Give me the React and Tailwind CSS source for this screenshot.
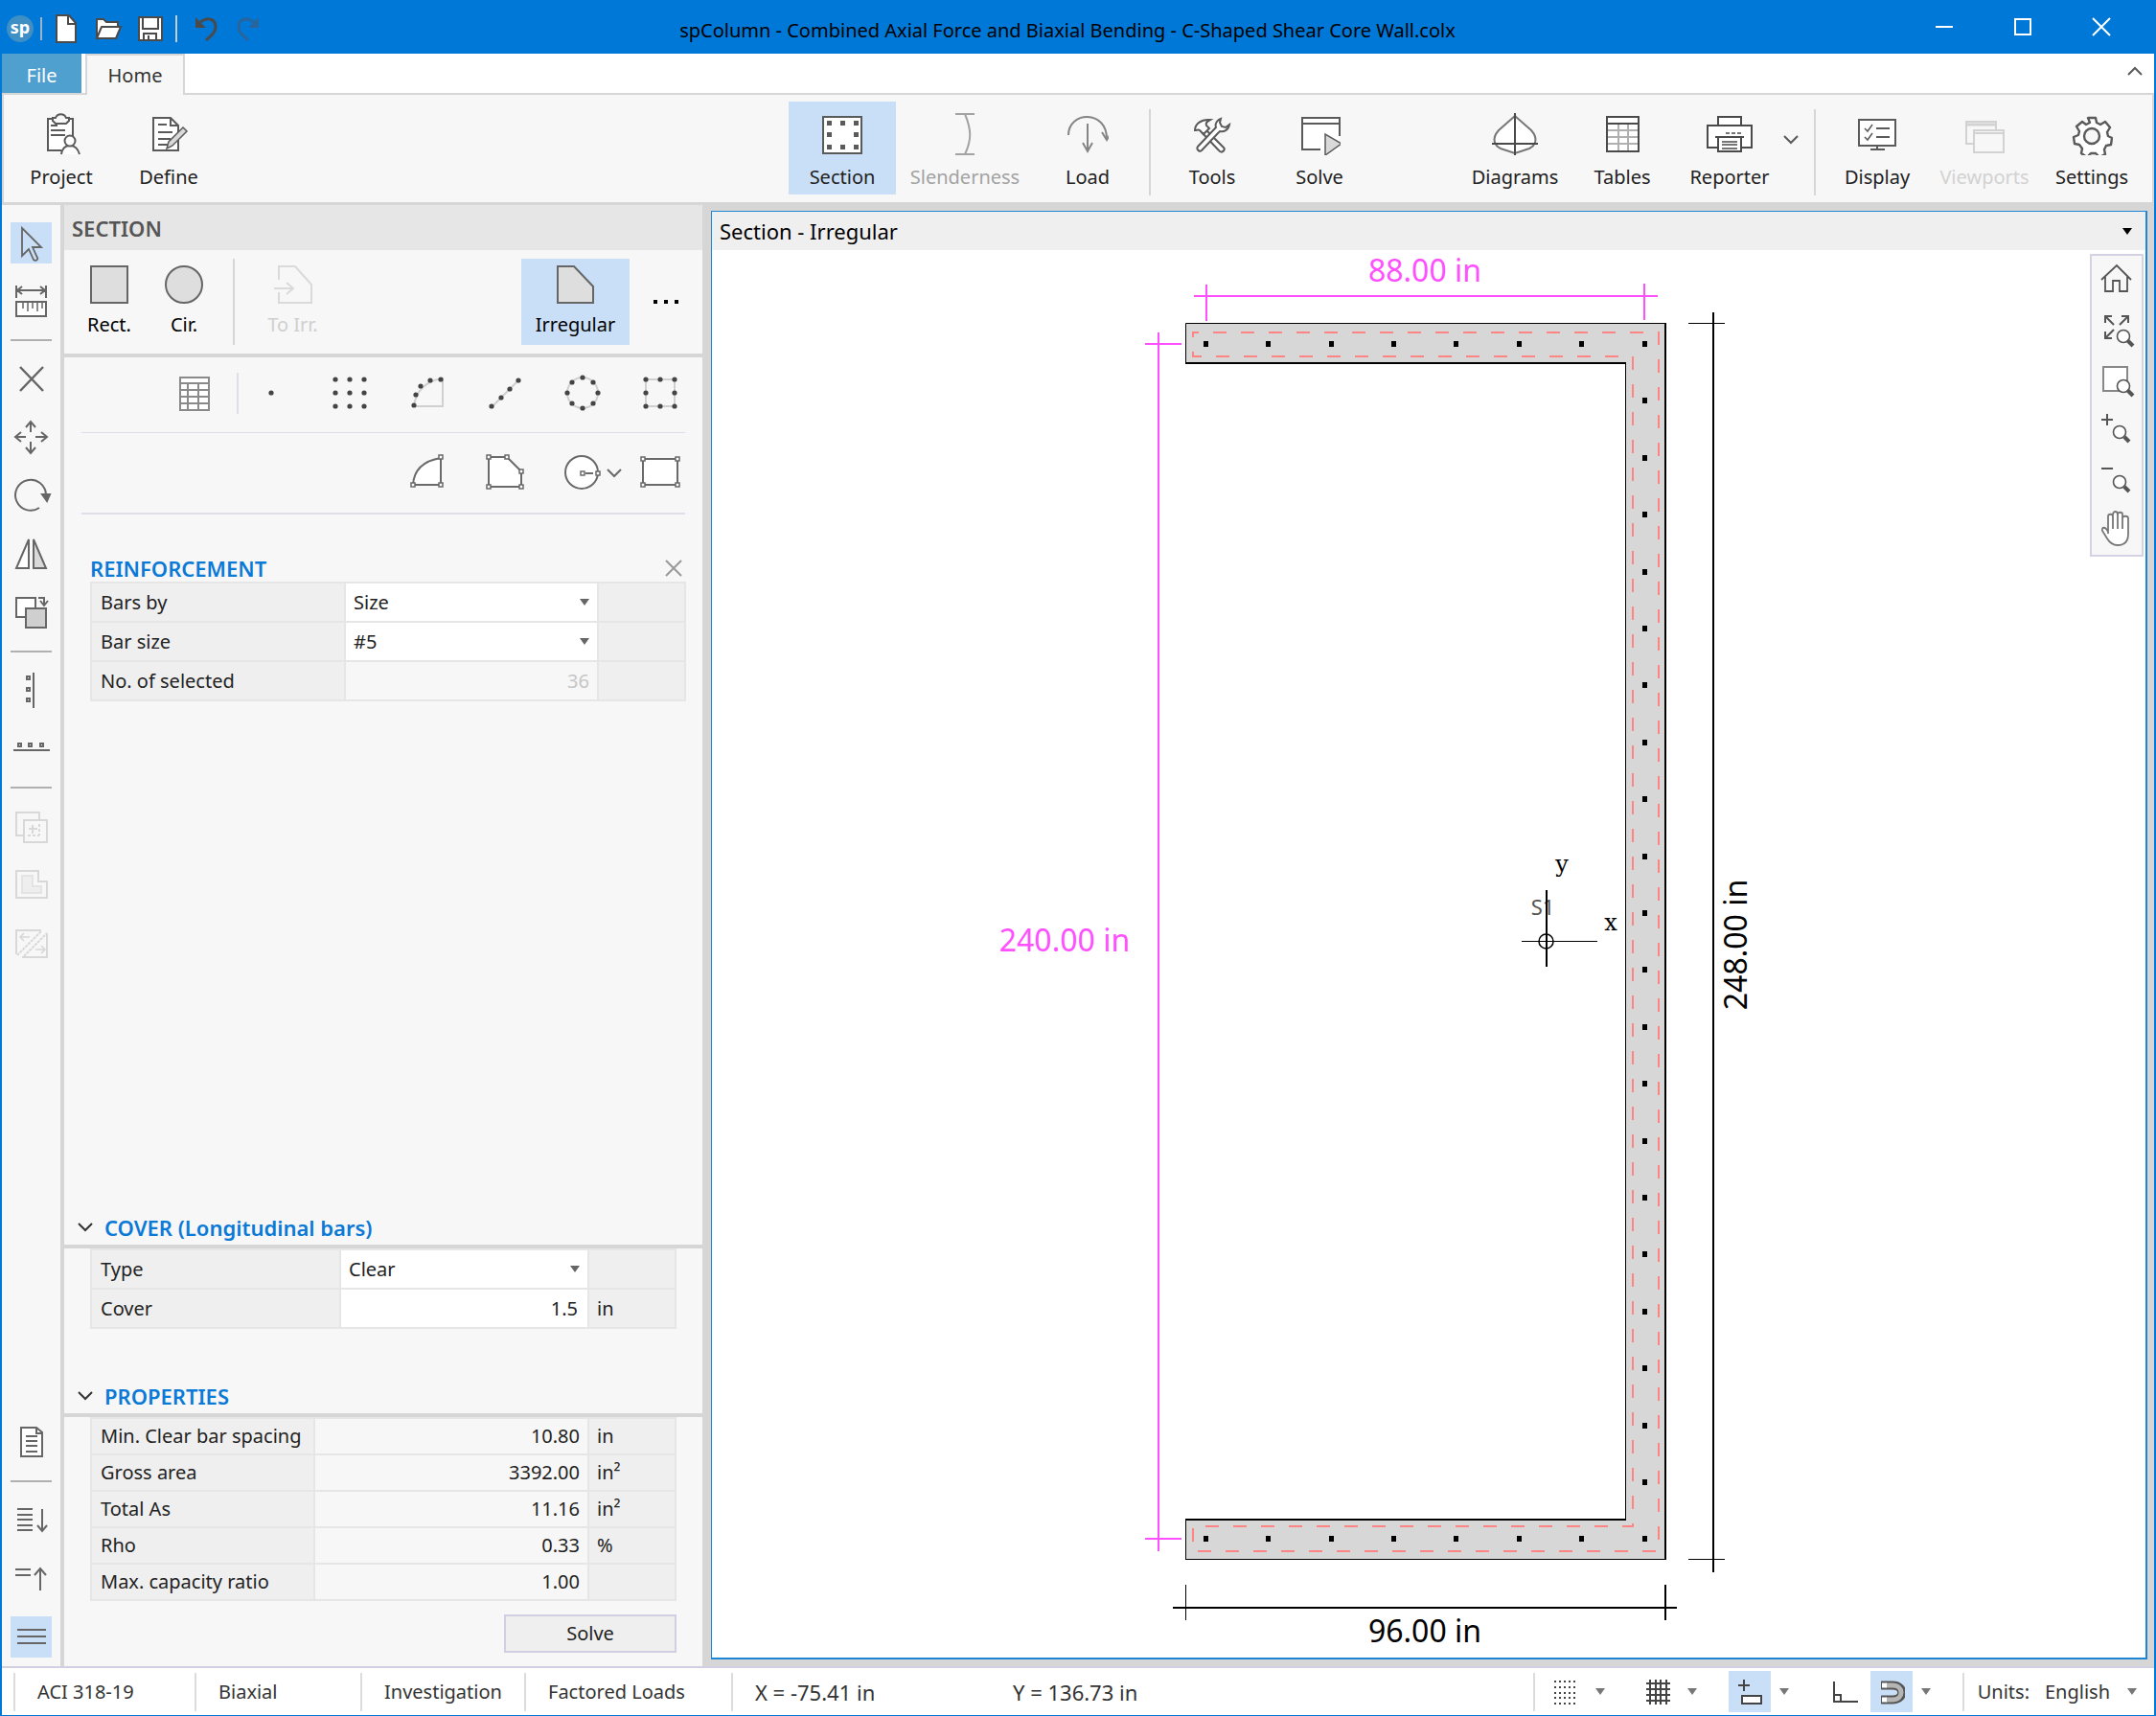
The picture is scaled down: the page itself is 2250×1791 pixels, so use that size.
import React, { useState } from 'react'
import clsx from 'clsx'

// plain line icon, stroke follows the text colour
function Ico({ w = 44, h = 44, sw = 2, className, children }){
  return (
    <svg width={w} height={h} viewBox={`0 0 ${w} ${h}`} fill="none" stroke="currentColor" strokeWidth={sw} className={clsx('shrink-0', className)} aria-hidden="true">
      {children}
    </svg>
  )
}

function Caret({ className }){
  return (
    <svg width="10" height="7" viewBox="0 0 10 7" className={clsx('shrink-0', className)} aria-hidden="true">
      <path d="M0 0h10L5 7z" fill="currentColor" />
    </svg>
  )
}

function Chevron({ up, className }){
  return (
    <Ico w={16} h={12} className={className}>
      <path d={up ? 'M1 10l7-7 7 7' : 'M1 2l7 7 7-7'} />
    </Ico>
  )
}

/* ---------- ribbon ---------- */

const ribbonIcons = {
  project: (
    <Ico>
      <path d="M8 7h27v34H8z" fill="#fff" stroke="none" />
      <path d="M14 6H8v33h14M29 6h5v18" />
      <path d="M13 5h3c2-5 9-5 11 0h3v3l-3 3H16l-3-3z" fill="#f7f7f7" />
      <path d="M11 13h7M11 18h15M11 23h15" />
      <path d="M22 43c1-7 5-9 9-9s8 2 10 9" fill="#fff" />
      <circle cx="31" cy="29" r="5.5" fill="#fff" />
    </Ico>
  ),
  define: (
    <Ico>
      <path d="M6 5h18l8 8v26H6z" fill="#fff" />
      <path d="M24 5v8h8M11 12h9M11 20h15M11 27h13M11 33h10" />
      <path d="M37 15l4 4-15 15-6 3 2-7z" fill="#d9d9d9" strokeWidth="1.5" />
    </Ico>
  ),
  section: (
    <Ico>
      <path d="M2 4h40v38H2z" fill="#fff" />
      <g fill="currentColor" stroke="none">
        <path d="M6 8h5v5H6zM20 8h5v5h-5zM34 8h5v5h-5zM6 20h5v5H6zM34 20h5v5h-5zM6 33h5v5H6zM20 33h5v5h-5zM34 33h5v5h-5z" />
      </g>
    </Ico>
  ),
  slenderness: (
    <Ico>
      <path d="M12 1h20M12 43h20" />
      <path d="M22 1c7 17 7 27 0 42" />
    </Ico>
  ),
  load: (
    <Ico>
      <path d="M2 23C2 -2 42 -4 42 27" />
      <path d="M37 20l5 8 5-8" />
      <path d="M22 11v28M17 31l5 9 5-9" />
    </Ico>
  ),
  tools: (
    <Ico>
      <path d="M14 16l20 20c2 2-1 6-4 4L11 20" fill="#fff" />
      <path d="M4 18c0-6 6-12 16-11-4 2-5 4-4 6l3 3-6 6-4-4c-1-1-3 0-5 0z" fill="#fff" />
      <path d="M31 6c-5 2-6 6-5 9L7 35c-2 3 2 6 4 4l19-20c4 1 9-1 10-7l-4 3-4-1-2-4z" fill="#fff" />
    </Ico>
  ),
  solve: (
    <Ico>
      <path d="M4 5h39v34H4z" fill="#fff" stroke="none" />
      <path d="M43 24V5H4v33h19M4 11h39" />
      <path d="M28 22v22l17-12z" fill="#d9d9d9" strokeWidth="1.5" />
    </Ico>
  ),
  diagrams: (
    <Ico w={48} className="text-[#4a4a4a]">
      <path d="M24 3L7 18C-1 27 3 34 9 37L24 42 39 37C45 34 49 27 41 18z" fill="#fff" stroke="#777" />
      <path d="M24 0v44M0 32h48" />
    </Ico>
  ),
  tables: (
    <Ico className="text-[#4a4a4a]">
      <path d="M6 4h33v36H6z" fill="#fff" />
      <path d="M18 12v28M28 12v28M7 18h31M7 25h31M7 32h31" stroke="#b0b0b0" />
      <path d="M6 4h33v36H6zM6 11h33" />
    </Ico>
  ),
  reporter: (
    <Ico w={48} className="text-[#4a4a4a]">
      <path d="M12 13V4h24v9" fill="#fff" />
      <path d="M1 13h46v23H1z" fill="#fff" />
      <path d="M20 21h16" strokeDasharray="4 2" strokeWidth="1.5" />
      <path d="M12 25h24v15H12z" fill="#fff" />
      <path d="M9 25h30" />
      <path d="M16 30h16M16 33h16M16 37h16" strokeWidth="1.5" />
    </Ico>
  ),
  display: (
    <Ico>
      <path d="M3 7h38v27H3z" fill="#fff" />
      <path d="M15 38h15M22 34v4" />
      <path d="M9 16l3 3 5-7M9 25l3 3 5-7" strokeWidth="1.5" />
      <path d="M21 16h14M21 25h14" />
    </Ico>
  ),
  viewports: (
    <Ico>
      <path d="M11 32H3V9h31v8" />
      <path d="M3 12h31" strokeWidth="3" />
      <path d="M11 18h31v23H11zM11 21h31" />
    </Ico>
  ),
  settings: (
    <Ico>
      <path d="M18 5h8l1 5 4 2 5-3 5 6-3 5 1 4 4 2-1 7-5 1-2 4 1 5-6 3-4-4h-5l-4 4-6-4 1-5-3-4-5-1-1-7 5-2 1-4-3-5 6-5 4 3 4-2z" fill="#fff" strokeWidth="2.4" strokeLinejoin="round" />
      <circle cx="22" cy="24" r="8" fill="#f7f7f7" strokeWidth="2.4" />
    </Ico>
  ),
}

function RibbonButton({ icon, label, active, disabled, faint, wide, tint }){
  return (
    <button
      disabled={disabled}
      className={clsx(
        'flex h-[97px] flex-col items-center pt-3',
        wide ? 'w-36' : 'w-28',
        active && 'bg-[#c9dff7]',
        faint ? 'text-[#d2d2d2]' : disabled ? 'text-[#a3a3a3]' : 'text-[#222]'
      )}
    >
      <span className={clsx('flex h-11 items-center', tint || (!disabled && 'text-[#5a5a5a]'))}>{ribbonIcons[icon]}</span>
      <span className="mt-[9px] leading-7">{label}</span>
    </button>
  )
}

function RibbonSep(){
  return <div className="mx-2 h-[90px] w-0.5 self-center bg-[#d6d6d6]" />
}

function Ribbon(){
  return (
    <div className="flex h-[115px] border-x-2 border-b-[3px] border-[#d6d6d6] bg-[#f7f7f7] pt-[7px] pr-[7px] pl-1">
      <RibbonButton icon="project" label="Project" />
      <RibbonButton icon="define" label="Define" />
      <div className="ml-auto flex">
        <RibbonButton icon="section" label="Section" active />
        <RibbonButton icon="slenderness" label="Slenderness" disabled wide />
        <RibbonButton icon="load" label="Load" tint="text-[#858585]" />
        <RibbonSep />
        <RibbonButton icon="tools" label="Tools" />
        <RibbonButton icon="solve" label="Solve" />
      </div>
      <div className="ml-[92px] flex">
        <RibbonButton icon="diagrams" label="Diagrams" />
        <RibbonButton icon="tables" label="Tables" />
        <RibbonButton icon="reporter" label="Reporter" />
        <button aria-label="Reporter options" className="w-6 pb-[26px] text-[#5a5a5a]"><Chevron /></button>
        <RibbonSep />
        <RibbonButton icon="display" label="Display" />
        <RibbonButton icon="viewports" label="Viewports" disabled faint />
        <RibbonButton icon="settings" label="Settings" />
      </div>
    </div>
  )
}

/* ---------- title bar and tabs ---------- */

function TitleBar(){
  return (
    <header className="flex h-14 items-center bg-[#0078d7]">
      <div className="flex w-[280px] items-center pt-1 pl-[5px]">
        <span className="flex h-7 w-7 items-center justify-center rounded-full bg-[#3d8fc4] pb-1 text-lg font-bold leading-none text-white">sp</span>
        <span className="mx-[7px] h-6 w-0.5 bg-[#9db4c8]" />
        <button aria-label="New" className="flex w-9 justify-center text-[#4a4a4a]">
          <Ico w={24} h={30}><path d="M2 1h13l7 8v20H2z" fill="#fff" /><path d="M14 1v9h8" /></Ico>
        </button>
        <button aria-label="Open" className="ml-2 flex w-9 justify-center text-[#4a4a4a]">
          <Ico w={30} h={24}><path d="M3 20V2h7l3 3h12v5" fill="#fff" /><path d="M3 22l5-12h20l-5 12z" fill="#fff" /></Ico>
        </button>
        <button aria-label="Save" className="ml-2 flex w-9 justify-center text-[#4a4a4a]">
          <Ico w={26} h={26}><path d="M1 1h24v24H1z" fill="#fff" /><path d="M5 1v12h16V1M6 25v-7h13v7M11 20v4" /></Ico>
        </button>
        <span className="mx-2 h-7 w-0.5 bg-[#c4cdd6]" />
        <button aria-label="Undo" className="ml-1 flex w-9 justify-center text-[#4a4a4a]">
          <Ico w={24} h={26} sw={3}><path d="M6 6c8-6 16-3 16 5 0 5-3 8-10 14" /><path d="M1 1v11h11z" fill="currentColor" stroke="none" /></Ico>
        </button>
        <button aria-label="Redo" className="ml-2 flex w-9 justify-center text-[#27659c]">
          <Ico w={24} h={26} sw={3}><path d="M18 6C10 0 2 3 2 11c0 5 3 8 10 14" /><path d="M23 1v11H12z" fill="currentColor" stroke="none" /></Ico>
        </button>
      </div>
      <h1 className="min-w-0 flex-1 truncate pt-2 text-center">spColumn - Combined Axial Force and Biaxial Bending - C-Shaped Shear Core Wall.colx</h1>
      <div className="flex w-[302px] justify-end pr-3.5 text-white">
        <button aria-label="Minimize" className="flex w-[82px] justify-center"><Ico w={20} h={20}><path d="M1 10h18" /></Ico></button>
        <button aria-label="Maximize" className="flex w-[82px] justify-center"><Ico w={20} h={20}><path d="M2 2h16v16H2z" /></Ico></button>
        <button aria-label="Close" className="flex w-[82px] justify-center"><Ico w={20} h={20}><path d="M1 1l18 18M19 1L1 19" /></Ico></button>
      </div>
    </header>
  )
}

function Tabs(){
  return (
    <nav className="flex h-[43px] bg-white">
      <button className="w-[83px] border-b-2 border-[#d6d6d6] bg-[#4f9fcf] bg-clip-padding pt-1 text-white">File</button>
      <span className="w-1 border-b-2 border-[#d6d6d6]" />
      <button className="w-[104px] border-x-2 border-t-2 border-[#d6d6d6] bg-[#f7f7f7] text-[#333]">Home</button>
      <div className="flex flex-1 items-start justify-end border-b-2 border-[#d6d6d6] pt-3 pr-3 text-[#5a5a5a]">
        <button aria-label="Collapse ribbon"><Chevron up /></button>
      </div>
    </nav>
  )
}

/* ---------- left tool strip ---------- */

const toolsTop = [
  { name: 'Select', active: true, icon: <path d="M12 6v29l7-7 5 11c2 2 5 0 4-2l-5-11h9z" strokeWidth="1.8" /> },
  { name: 'Measure', icon: <><path d="M6 5v13M37 5v13M7 10h29M12 6l-5 4 5 4M31 6l5 4-5 4" /><path d="M6 22h31v15H6z" fill="#fff" /><path d="M13 22v7M18 22v10M23 22v7M28 22v10M33 22v7" strokeWidth="1.5" /></> },
  null,
  { name: 'Delete', icon: <path d="M10 9l24 25M34 9L10 34" strokeWidth="2.5" /> },
  { name: 'Move', icon: <path d="M21 16V6M16 11l5-6 5 6M21 26v11M16 32l5 6 5-6M16 21H5M11 16l-6 5 6 5M26 21h12M32 16l6 5-6 5" /> },
  { name: 'Rotate', icon: <><path d="M30 34A16 16 0 1 1 37 20" /><path d="M33 20h8l-3 7z" fill="currentColor" /></> },
  { name: 'Mirror', icon: <><path d="M19 6v30H6z" fill="#fff" /><path d="M24 6v30h13z" fill="#d9d9d9" /></> },
  { name: 'Duplicate', icon: <><path d="M6 6h20v20H6z" fill="#fff" /><path d="M16 17h21v20H16z" fill="#cfcfcf" /><path d="M29 6h6v8M31 9l4 5 4-5" /></> },
  null,
  { name: 'Align vertical', icon: <><path d="M24 3v37" /><path d="M17 7h3v3h-3zM17 19h3v3h-3zM17 30h3v3h-3z" /></> },
  { name: 'Align horizontal', icon: <><path d="M3 23h38" /><path d="M8 16h3v3H8zM19 16h3v3h-3zM31 16h3v3h-3z" /></> },
  null,
  { name: 'Merge', disabled: true, icon: <><path d="M14 31H6V7h24v8" /><path d="M14 15h24v23H14z" /><path d="M18 31h12M30 19v12" strokeDasharray="3 2" /><path d="M23 20v9M19 24h9" /></> },
  { name: 'Subtract', disabled: true, icon: <><path d="M6 7h23v11h9v17H6z" /><path d="M12 12h11v11h9v7H12z" fill="#eee" stroke="#e4e4e4" /></> },
  { name: 'Divide', disabled: true, icon: <><path d="M6 33V8h26M12 36h26V11" /><path d="M7 34L32 9M14 35L38 11" strokeDasharray="3 1" /><path d="M10 15h10M14 11l-4 4 4 4M26 28h10M32 24l4 4-4 4" strokeWidth="1.6" /></> },
]

const toolsBottom = [
  { name: 'Report', icon: <><path d="M11 6h16l6 5v25H11z" fill="#fff" /><path d="M27 6v6h6M16 15h12M16 20h12M16 25h12M16 31h12" /></> },
  null,
  { name: 'Expand list', icon: <><path d="M7 10h16M7 16h16M7 21h16M7 27h16M7 32h16" /><path d="M33 10v22M28 27l5 6 5-6" /></> },
  { name: 'Collapse list', icon: <><path d="M5 12h16M5 18h16" /><path d="M31 12v22M25 18l6-7 6 7" /></> },
  { name: 'Toggle panel', active: true, icon: <path d="M7 14h30M7 21h30M7 28h30" /> },
]

function ToolStrip({ tools }){
  return (
    <div className="flex flex-col gap-[18px]">
      {tools.map((t, i) => t ? (
        <button
          key={i}
          aria-label={t.name}
          disabled={t.disabled}
          className={clsx('flex h-[43px] w-[43px] items-center justify-center', t.active && 'bg-[#c9dff7]', t.disabled ? 'text-[#d8d8d8]' : 'text-[#666]')}
        >
          <Ico>{t.icon}</Ico>
        </button>
      ) : (
        <div key={i} className="h-0.5 w-[43px] bg-[#b0b0b0]" />
      ))}
    </div>
  )
}

/* ---------- section panel ---------- */

function ShapeButton({ label, active, disabled, narrow, children }){
  return (
    <button
      disabled={disabled}
      className={clsx('flex h-[90px] flex-col items-center pt-[5px]', narrow ? 'w-[78px]' : 'w-[113px]', active && 'bg-[#c9dff7]', disabled ? 'text-[#cfcfcf]' : 'text-black')}
    >
      <Ico className={disabled ? 'text-[#dadada]' : 'text-[#666]'}>{children}</Ico>
      <span className="mt-1.5 leading-7">{label}</span>
    </button>
  )
}

function Dots({ pts }){
  return pts.map(([x, y], i) => <circle key={i} cx={x} cy={y} r="2.6" fill="#444" stroke="none" />)
}

function Handles({ pts }){
  return pts.map(([x, y], i) => <rect key={i} x={x - 2} y={y - 2} width="4" height="4" fill="#fff" strokeWidth="1.5" />)
}

const grid3 = [[7, 7], [22, 7], [37, 7], [7, 21], [22, 21], [37, 21], [7, 35], [22, 35], [37, 35]]

function Cell({ label, children, width = 'w-[81px]', divided }){
  return (
    <div className={clsx('flex h-[43px] items-center justify-center', width, divided && 'border-l-2 border-[#dedee8]')}>
      <button aria-label={label} className="text-[#6a6a6a]"><Ico w={44} h={43}>{children}</Ico></button>
    </div>
  )
}

function DrawTools(){
  return (
    <div>
      <div className="flex justify-end pt-4 pr-1 pb-[19px]">
        <Cell label="Bar table" width="w-[89px]"><path d="M7 5h30v34H7z" fill="#fff" stroke="#8a8a8a" /><path d="M7 11h30M7 18h30M7 25h30M7 32h30M15 11v28M26 11v28" stroke="#8a8a8a" /></Cell>
        <Cell label="Single bar" width="w-[77px]" divided><Dots pts={[[18, 21]]} /></Cell>
        <Cell label="Bar grid"><Dots pts={grid3} /></Cell>
        <Cell label="Bars on arc"><path d="M8 35h30V6C22 8 10 18 8 35z" stroke="#d0d0d0" /><Dots pts={[[8, 34], [10, 23], [15, 14], [25, 8], [36, 7]]} /></Cell>
        <Cell label="Bars on line"><path d="M8 36L36 8" stroke="#d0d0d0" /><Dots pts={[[8, 35], [18, 26], [27, 17], [36, 8]]} /></Cell>
        <Cell label="Bars on circle"><circle cx="22" cy="21" r="16" stroke="#d0d0d0" /><Dots pts={[[22, 5], [33, 10], [38, 21], [33, 32], [22, 37], [11, 32], [6, 21], [11, 10]]} /></Cell>
        <Cell label="Bars on rectangle"><path d="M7 7h30v28H7z" stroke="#d0d0d0" /><Dots pts={grid3.filter((_, i) => i !== 4)} /></Cell>
      </div>
      <div className="mx-[18px] h-px bg-[#dedee8]" />
      <div className="flex justify-end pt-5 pr-1 pb-5">
        <Cell label="Sector"><path d="M7 34h29V6C18 9 8 18 7 34z" fill="#fff" /><Handles pts={[[7, 34], [36, 34], [36, 5]]} /></Cell>
        <Cell label="Polygon"><path d="M5 36V5h19l15 15v16z" fill="#fff" /><Handles pts={[[5, 5], [24, 5], [39, 20], [39, 36], [5, 36]]} /></Cell>
        <div className="flex h-[43px] w-[81px] items-center justify-center pl-[18px] text-[#6a6a6a]">
          <button aria-label="Circle"><Ico w={44} h={43}><circle cx="22" cy="21" r="17" fill="#fff" /><path d="M26 22h8" /><Handles pts={[[23, 22], [39, 22]]} /></Ico></button>
          <button aria-label="Circle options" className="pl-1"><Chevron /></button>
        </div>
        <Cell label="Rectangle"><path d="M4 7h36v27H4z" fill="#fff" /><Handles pts={[[4, 7], [40, 7], [40, 34], [4, 34]]} /></Cell>
      </div>
      <div className="mx-[18px] h-0.5 bg-[#dedee8]" />
    </div>
  )
}

const line = 'border-2 border-[#e6e6e6]'

function PropTable({ cols, rows, tall }){
  return (
    <table className="w-full table-fixed border-collapse text-left text-[#222]">
      <colgroup>
        <col className={cols} />
        <col />
        <col className="w-[91px]" />
      </colgroup>
      <tbody>
        {rows.map(r => (
          <tr key={r.label} className={tall ? 'h-[41px]' : 'h-[38px]'}>
            <th scope="row" className={clsx(line, 'bg-[#efefef] pl-[9px] font-normal whitespace-nowrap')}>
              {r.id ? <label htmlFor={r.id}>{r.label}</label> : r.label}
            </th>
            <td className={clsx(line, r.id ? 'bg-white' : 'bg-[#f7f7f7] pr-2 text-right', r.dim && 'text-[#c6c6c6]')}>{r.value}</td>
            <td className={clsx(line, 'bg-[#efefef] pl-2')}>{r.unit}</td>
          </tr>
        ))}
      </tbody>
    </table>
  )
}

function Pick({ id, value, onChange, options }){
  return (
    <div className="relative">
      <select id={id} value={value} onChange={e=>onChange(e.target.value)} className="block w-full appearance-none bg-white pl-2 leading-7 outline-none">
        {options.map(o => <option key={o}>{o}</option>)}
      </select>
      <Caret className="pointer-events-none absolute top-2.5 right-2 text-[#666]" />
    </div>
  )
}

function GroupHead({ children }){
  return (
    <div className="flex items-center gap-3 border-b-4 border-[#d6d6d6] pb-1 pl-3.5">
      <Chevron className="text-[#333]" />
      <h3 className="text-[22px] font-semibold leading-7 text-[#0b7ad6]">{children}</h3>
    </div>
  )
}

function SectionPanel(){
  const [barsBy, setBarsBy] = useState('Size')
  const [barSize, setBarSize] = useState('#5')
  const [coverType, setCoverType] = useState('Clear')
  const [cover, setCover] = useState('1.5')

  return (
    <aside className="flex w-[666px] shrink-0 flex-col bg-[#f7f7f7]">
      <h2 className="h-[47px] bg-[#e6e6e6] pt-2.5 pl-2 text-[22px] font-semibold leading-7 text-[#555]">SECTION</h2>
      <div className="flex border-b-4 border-[#d6d6d6] py-[9px] pl-2">
        <ShapeButton label="Rect." narrow><path d="M3 3h38v38H3z" fill="#dedede" /></ShapeButton>
        <ShapeButton label="Cir." narrow><circle cx="22" cy="22" r="19" fill="#dedede" /></ShapeButton>
        <div className="mr-1 ml-3 h-[90px] w-0.5 bg-[#d6d6d6]" />
        <ShapeButton label="To Irr." disabled><path d="M7 17V3h17l17 19v19H7V30M2 26h20M15 20l7 6-7 6" /></ShapeButton>
        <div className="ml-auto flex">
          <ShapeButton label="Irregular" active><path d="M3 3h17l20 21v17H3z" fill="#dedede" /></ShapeButton>
          <button aria-label="More shapes" className="flex w-[76px] items-center justify-center gap-[7px]">
            <span className="h-1 w-1 bg-black" /><span className="h-1 w-1 bg-black" /><span className="h-1 w-1 bg-black" />
          </button>
        </div>
      </div>
      <DrawTools />

      <div className="mt-[42px] pr-[17px] pl-[27px]">
        <div className="flex items-center justify-between pr-1">
          <h3 className="text-[22px] font-semibold leading-7 text-[#0b7ad6]">REINFORCEMENT</h3>
          <button aria-label="Close reinforcement" className="text-[#999]"><Ico w={18} h={18}><path d="M1 1l16 16M17 1L1 17" /></Ico></button>
        </div>
        <PropTable
          tall
          cols="w-[265px]"
          rows={[
            { label: 'Bars by', id: 'bars-by', value: <Pick id="bars-by" value={barsBy} onChange={setBarsBy} options={['Size', 'Area']} /> },
            { label: 'Bar size', id: 'bar-size', value: <Pick id="bar-size" value={barSize} onChange={setBarSize} options={['#4', '#5', '#6', '#7', '#8']} /> },
            { label: 'No. of selected', value: '36', dim: true },
          ]}
        />
      </div>

      <div className="mt-auto">
        <GroupHead>COVER (Longitudinal bars)</GroupHead>
        <div className="px-[27px]">
          <PropTable
            tall
            cols="w-[260px]"
            rows={[
              { label: 'Type', id: 'cover-type', value: <Pick id="cover-type" value={coverType} onChange={setCoverType} options={['Clear', 'Transverse']} /> },
              { label: 'Cover', id: 'cover', unit: 'in', value: <input id="cover" value={cover} onChange={e=>setCover(e.target.value)} className="block w-full bg-white pr-2.5 text-right leading-7 outline-none" /> },
            ]}
          />
        </div>
      </div>
      <div className="mt-[56px]">
        <GroupHead>PROPERTIES</GroupHead>
        <div className="px-[27px] pb-3.5">
          <PropTable
            cols="w-[233px]"
            rows={[
              { label: 'Min. Clear bar spacing', value: '10.80', unit: 'in' },
              { label: 'Gross area', value: '3392.00', unit: 'in²' },
              { label: 'Total As', value: '11.16', unit: 'in²' },
              { label: 'Rho', value: '0.33', unit: '%' },
              { label: 'Max. capacity ratio', value: '1.00', unit: '' },
            ]}
          />
          <div className="mt-3.5 flex justify-end">
            <button className="h-10 w-[180px] border-2 border-[#d0d0e0] bg-[#efefef] text-[#222]">Solve</button>
          </div>
        </div>
      </div>
    </aside>
  )
}

/* ---------- drawing canvas ---------- */

const armX = [1259, 1324, 1390, 1455, 1520, 1586, 1651, 1717]
const webY = Array.from({ length: 20 }, (_, i) => Math.round(359 + (i + 1) * 59.4))
const bars = [
  ...armX.map(x => [x, 359]),
  ...webY.map(y => [1717, y]),
  ...armX.map(x => [x, 1606]),
]

function SectionDrawing(){
  return (
    <svg viewBox="743 261 1496 1469" className="h-0 min-h-[600px] w-full flex-1" fontSize="32" textAnchor="middle">
      <path d="M1237 337h501v1291h-501v-42h459V379h-459z" fill="#d7d7d7" />
      <g stroke="#000" fill="none">
        <path d="M1237.5 1628V1585M1237.5 380V337.5H1738M1696.5 379v1207M1237 1627.5h501" />
        <path d="M1237 379h460M1237 1586h460M1738 337v1291" strokeWidth="2" />
      </g>
      <path d="M1245 347h486v1272h-486v-26h459V372h-459z" fill="none" stroke="#ff8585" strokeWidth="2" strokeDasharray="14 15" strokeDashoffset="8" />
      {bars.map(([x, y]) => <rect key={`${x}-${y}`} x={x - 3} y={y - 3} width="5" height="6" />)}

      {/* bar to bar dimensions */}
      <g stroke="#ff50ff" strokeWidth="2">
        <path d="M1246 309h484M1259 297v38M1716 296v38" />
        <path d="M1209 347v1272M1195 359h38M1195 1606h38" />
      </g>
      <g fill="#ff50ff">
        <text x="1487" y="294">88.00 in</text>
        <text x="1111" y="993">240.00 in</text>
      </g>

      {/* overall dimensions */}
      <g stroke="#000" strokeWidth="2">
        <path d="M1788 326v1315M1224 1678h526M1738 1654v37" />
        <path d="M1762 337.5h38M1762 1627.5h38M1237.5 1654v37" strokeWidth="1" />
      </g>
      <text x="1487" y="1714">96.00 in</text>
      <text transform="translate(1823 986) rotate(-90)">248.00 in</text>

      {/* centroid and axes */}
      <text x="1610" y="955" fontSize="22" fill="#555">S1</text>
      <g stroke="#000" fill="none">
        <path d="M1588 982.5h79" />
        <path d="M1614 929v80" strokeWidth="2" />
        <circle cx="1613.5" cy="982.5" r="7.5" strokeWidth="1.5" />
      </g>
      <g fontFamily="DejaVu Serif, serif" fontSize="24">
        <text x="1630" y="910">y</text>
        <text x="1681" y="971">x</text>
      </g>
    </svg>
  )
}

const lens = <><circle cx="27" cy="26" r="6.5" fill="#fff" strokeWidth="1.6" /><path d="M31 30l6 6" strokeWidth="4" /></>
const smallLens = <><circle cx="23" cy="22" r="6.5" fill="#fff" strokeWidth="1.6" /><path d="M28 27l5 5" strokeWidth="4" /></>

const viewTools = [
  { name: 'Home view', icon: <path d="M4 19L20 4l15 15M8 16v15h8V20h7v11h8V16" strokeWidth="1.8" /> },
  { name: 'Zoom extents', icon: <><path d="M8 12V5h7M8 5l9 9M25 5h7v7M32 5l-9 9M8 21v7h7M8 28l9-9" />{lens}</> },
  { name: 'Zoom window', icon: <><path d="M6 6h25v25H6z" fill="#fff" stroke="#888" />{lens}</> },
  { name: 'Zoom in', icon: <><path d="M10 3v12M4 9h12" />{smallLens}</> },
  { name: 'Zoom out', icon: <><path d="M4 8h12" />{smallLens}</> },
  { name: 'Pan', icon: <path d="M11 24V6c0-3 5-3 5 0v13V4c0-4 5-4 5 0v15V4c0-3 5-3 5 0v15V8c0-3 6-3 6 0v16c0 8-4 12-11 12-5 0-8-2-11-7l-5-8c-1-4 3-5 6 1z" fill="#fff" stroke="#777" strokeWidth="1.8" /> },
]

function Viewport(){
  return (
    <main className="flex min-w-0 flex-1 flex-col bg-[#d6d6d6] pt-1.5 pr-[7px] pb-[7px] pl-[9px]">
      <div className="relative flex flex-1 flex-col border-t border-r-2 border-b-2 border-l border-[#1f86d6] bg-white">
        <div className="flex h-10 items-center justify-between bg-[#efefef] pr-3.5 pl-2">
          <h2 className="text-[22px]">Section - Irregular</h2>
          <button aria-label="Viewport menu"><Caret /></button>
        </div>
        <SectionDrawing />
        <div className="absolute top-11 right-0.5 flex w-14 flex-col items-center border-2 border-[#d3d3e3] bg-[#f7f7f7] text-[#555]">
          {viewTools.map(t => (
            <button key={t.name} aria-label={t.name} className="flex h-[52px] w-full items-center justify-center"><Ico w={40} h={40}>{t.icon}</Ico></button>
          ))}
        </div>
      </div>
    </main>
  )
}

/* ---------- status bar ---------- */

function SnapButton({ label, active, caret = true, children }){
  return (
    <>
      <button aria-label={label} className={clsx('flex h-[43px] w-11 items-center justify-center', active && 'bg-[#c9dff7]')}><Ico w={28} h={28}>{children}</Ico></button>
      {caret && <button aria-label={`${label} options`} className="flex w-7 justify-center text-[#777]"><Caret /></button>}
    </>
  )
}

function StatusBar(){
  const cell = 'flex h-10 items-center border-l-2 border-[#dcdcdc] pl-[23px]'
  return (
    <footer className="flex h-[51px] items-center border-t-2 border-[#d0d0e0] bg-white pl-3 text-[#333]">
      <div className={clsx(cell, 'w-[189px]')}>ACI 318-19</div>
      <div className={clsx(cell, 'w-[173px]')}>Biaxial</div>
      <div className={clsx(cell, 'w-[171px]')}>Investigation</div>
      <div className={clsx(cell, 'w-[216px]')}>Factored Loads</div>
      <div className={clsx(cell, 'w-[294px] text-[22px]')}>X = -75.41 in</div>
      <div className="text-[22px]">Y = 136.73 in</div>
      <div className="ml-auto flex h-10 items-center border-l-2 border-[#dcdcdc] pl-2.5 text-[#444]">
        <SnapButton label="Snap grid">
          <path d="M2 3h24M2 9h24M2 15h24M2 20h24M2 26h24" strokeDasharray="2 3" />
        </SnapButton>
        <span className="w-6" />
        <SnapButton label="Grid lines">
          <path d="M2 5h25M2 11h25M2 17h25M2 23h25M6 1v26M12 1v26M17 1v26M23 1v26" />
        </SnapButton>
        <span className="w-6" />
        <SnapButton label="Dynamic input" active>
          <path d="M8 1v12M2 7h12M6 18h20v8H6z" /><path d="M7 19h18v6H7z" fill="#fff" stroke="none" />
        </SnapButton>
        <span className="w-7" />
        <SnapButton label="Ortho" caret={false}>
          <path d="M2 3v21h25M3 17h6v7" />
        </SnapButton>
        <span className="w-1" />
        <SnapButton label="Object snap" active>
          <path d="M3 7h12c13 0 13 15 0 15H3" stroke="#555" strokeWidth="9" /><path d="M8 7h7c12 0 12 15 0 15H8" stroke="#b5b5b5" strokeWidth="5" /><path d="M4 7h5M4 22h5" stroke="#fff" strokeWidth="5" />
        </SnapButton>
      </div>
      <div className="ml-6 flex h-10 items-center gap-4 border-l-2 border-[#dcdcdc] pr-[18px] pl-3.5">
        <label htmlFor="units">Units:</label>
        <div className="relative flex items-center">
          <select id="units" defaultValue="English" className="w-24 appearance-none bg-white outline-none">
            <option>English</option>
            <option>Metric</option>
          </select>
          <Caret className="pointer-events-none absolute right-0 text-[#777]" />
        </div>
      </div>
    </footer>
  )
}

export default function App(){
  return (
    <div className="flex min-h-screen flex-col border-x-2 border-b border-[#0078d7] bg-white font-['Noto_Sans','Open_Sans',sans-serif] text-[20px] leading-7 text-black">
      <TitleBar />
      <Tabs />
      <Ribbon />
      <div className="flex flex-1">
        <div className="flex w-[65px] shrink-0 flex-col justify-between gap-[18px] border-r-4 border-[#d6d6d6] bg-[#f7f7f7] pt-[18px] pb-[9px] pl-[9px]">
          <ToolStrip tools={toolsTop} />
          <ToolStrip tools={toolsBottom} />
        </div>
        <SectionPanel />
        <Viewport />
      </div>
      <StatusBar />
    </div>
  )
}
